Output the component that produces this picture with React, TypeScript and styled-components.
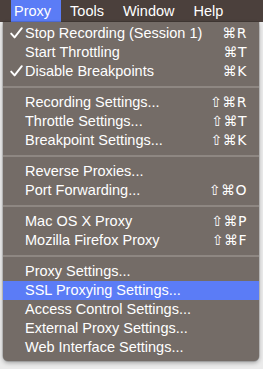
import React from "react";
import styled, { createGlobalStyle } from "styled-components";

const Global = createGlobalStyle`
  html, body { margin: 0; padding: 0; background: #ebebeb; }
  body { font-family: "Liberation Sans", "DejaVu Sans", Arial, sans-serif; -webkit-font-smoothing: antialiased; }
`;

const Screen = styled.div`
  position: relative;
  width: 263px;
  height: 369px;
  overflow: hidden;
  background: #ebebeb;
`;

const MenuBar = styled.div`
  display: flex;
  align-items: stretch;
  gap: 6px;
  height: 22px;
  padding-left: 11px;
  background: #4b403c;
`;

const BarItem = styled.div<{ $active?: boolean }>`
  display: flex;
  align-items: center;
  padding: 0 10px 0 3px;
  font-size: 14.5px;
  color: #ffffff;
  background: ${(p) => (p.$active ? "#5b7cf6" : "transparent")};
`;

const Dropdown = styled.div`
  position: absolute;
  left: 3px;
  top: 22px;
  width: 256px;
  padding: 1.5px 0 4px;
  background: #746c67;
  border-radius: 0 0 5px 5px;
  box-shadow: 0 2px 4px rgba(0, 0, 0, 0.3), 0 0 0 0.5px rgba(0, 0, 0, 0.25);
  display: flex;
  flex-direction: column;
`;

const Item = styled.div<{ $highlight?: boolean }>`
  display: flex;
  align-items: center;
  height: 19px;
  padding: 0 12px 0 0;
  font-size: 14.5px;
  color: #ffffff;
  background: ${(p) => (p.$highlight ? "#5b7cf6" : "transparent")};
`;

const Gutter = styled.span`
  width: 22px;
  display: flex;
  align-items: center;
  justify-content: flex-end;
  flex-shrink: 0;
`;

const Label = styled.span`
  flex: 1;
  white-space: nowrap;
`;

const Shortcut = styled.span`
  white-space: nowrap;
  font-family: "DejaVu Sans", "Liberation Sans", sans-serif;
  font-size: 14px;
  letter-spacing: 0.5px;
`;

const Separator = styled.div`
  height: 12px;
  display: flex;
  align-items: center;
  &::after {
    content: "";
    flex: 1;
    height: 2px;
    background: #8e8782;
  }
`;

const Check = () => (
  <svg width="13" height="12" viewBox="0 0 13 12" style={{ marginRight: 2 }}>
    <path d="M1.2 6.6 L4.6 10.4 L11.8 1.2" fill="none" stroke="#fff" strokeWidth="1.9" strokeLinecap="round" strokeLinejoin="round" />
  </svg>
);

type Entry = { label: string; key?: string; check?: boolean; hl?: boolean } | "sep";

const entries: Entry[] = [
  { label: "Stop Recording (Session 1)", key: "⌘R", check: true },
  { label: "Start Throttling", key: "⌘T" },
  { label: "Disable Breakpoints", key: "⌘K", check: true },
  "sep",
  { label: "Recording Settings...", key: "⇧⌘R" },
  { label: "Throttle Settings...", key: "⇧⌘T" },
  { label: "Breakpoint Settings...", key: "⇧⌘K" },
  "sep",
  { label: "Reverse Proxies..." },
  { label: "Port Forwarding...", key: "⇧⌘O" },
  "sep",
  { label: "Mac OS X Proxy", key: "⇧⌘P" },
  { label: "Mozilla Firefox Proxy", key: "⇧⌘F" },
  "sep",
  { label: "Proxy Settings..." },
  { label: "SSL Proxying Settings...", hl: true },
  { label: "Access Control Settings..." },
  { label: "External Proxy Settings..." },
  { label: "Web Interface Settings..." },
];

export default function App() {
  return (
    <Screen>
      <Global />
      <MenuBar>
        <BarItem $active>Proxy</BarItem>
        <BarItem>Tools</BarItem>
        <BarItem>Window</BarItem>
        <BarItem>Help</BarItem>
      </MenuBar>
      <Dropdown>
        {entries.map((e, i) =>
          e === "sep" ? (
            <Separator key={i} />
          ) : (
            <Item key={i} $highlight={e.hl}>
              <Gutter>{e.check ? <Check /> : null}</Gutter>
              <Label>{e.label}</Label>
              {e.key ? <Shortcut>{e.key}</Shortcut> : null}
            </Item>
          )
        )}
      </Dropdown>
    </Screen>
  );
}
